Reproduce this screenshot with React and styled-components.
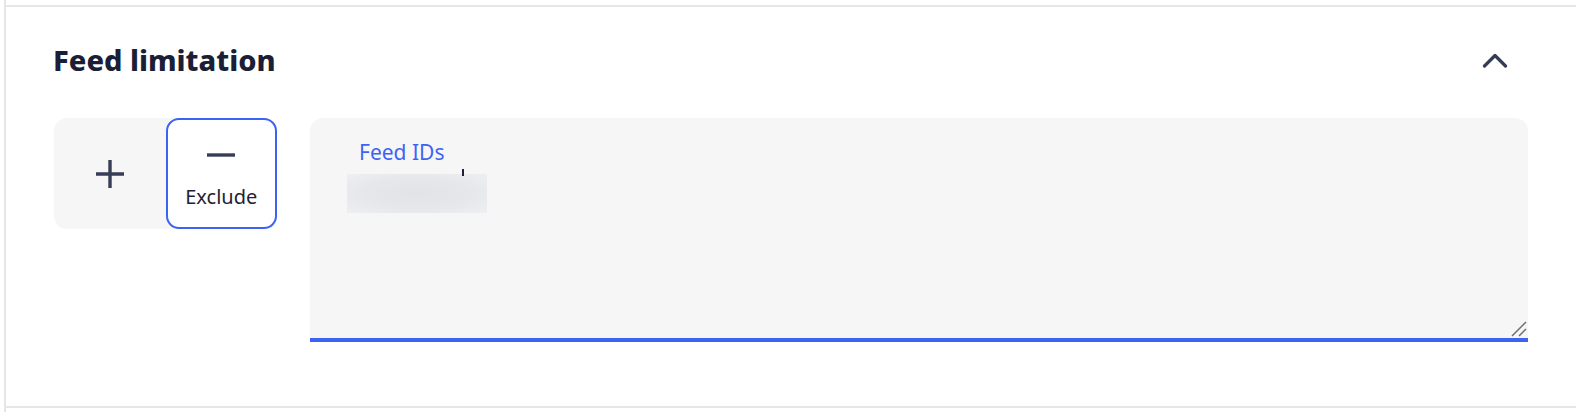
import React from 'react';
import styled, { createGlobalStyle } from 'styled-components';

const Global = createGlobalStyle`
  html, body {
    margin: 0;
    padding: 0;
    background: #ffffff;
  }
  body {
    font-family: 'Noto Sans', 'Open Sans', sans-serif;
    color: #1e2236;
  }
`;

const Frame = styled.div`
  margin-left: 4px;
  height: 412px;
  border-left: 2px solid #e6e6e6;
  box-sizing: border-box;
  padding-top: 5px;
`;

const Section = styled.section`
  border-top: 2px solid #e6e6e6;
  border-bottom: 2px solid #e6e6e6;
  height: 403px;
  box-sizing: border-box;
  padding: 35px 48px 0 47px;
`;

const Header = styled.div`
  display: flex;
  align-items: center;
  justify-content: space-between;
  height: 36px;
`;

const Title = styled.h2`
  margin: 0;
  font-family: 'Noto Sans', sans-serif;
  font-weight: 800;
  font-size: 29px;
  line-height: 36px;
  color: #1a1e36;
`;

const Collapse = styled.button`
  border: 0;
  background: none;
  padding: 0;
  margin-right: 19px;
  width: 28px;
  height: 28px;
  display: flex;
  align-items: center;
  justify-content: center;
  color: #353c56;
  cursor: pointer;
`;

const Body = styled.div`
  display: flex;
  align-items: flex-start;
  gap: 33px;
  margin-top: 40px;
`;

const Toggle = styled.div`
  display: flex;
  width: 223px;
  height: 111px;
  margin-left: 1px;
  background: #f6f6f6;
  border-radius: 13px;
  flex-shrink: 0;
`;

const Option = styled.button`
  flex: 1;
  display: flex;
  flex-direction: column;
  align-items: center;
  justify-content: center;
  gap: 27px;
  border-radius: 13px;
  border: 2px solid ${p => (p.active ? '#3c63f5' : 'transparent')};
  background: ${p => (p.active ? '#ffffff' : 'transparent')};
  color: #1e2236;
  font-family: 'Noto Sans', sans-serif;
  font-size: 20px;
  line-height: 24px;
  padding: ${p => (p.active ? '13px 0 0' : '0')};
  cursor: pointer;
`;

const Field = styled.div`
  position: relative;
  flex: 1;
  height: 224px;
  background: #f6f6f6;
  border-radius: 13px 13px 0 0;
  border-bottom: 4px solid #3d63f4;
  box-sizing: border-box;
  padding: 20px 0 0 37px;
`;

const Label = styled.div`
  font-family: 'Noto Sans', sans-serif;
  font-size: 21px;
  color: #3d63f4;
  line-height: 28px;
  margin-left: 12px;
`;

const ValueRow = styled.div`
  position: relative;
  height: 40px;
  margin-top: 8px;
`;

const Blurred = styled.div`
  width: 140px;
  height: 39px;
  background: radial-gradient(ellipse at center, #e2e3e8 0%, #e6e7eb 55%, #eeeff2 100%);
`;

const Caret = styled.span`
  position: absolute;
  left: 115px;
  top: -5px;
  width: 2px;
  height: 7px;
  background: #1e2236;
`;

const Grip = styled.svg`
  position: absolute;
  right: 1px;
  bottom: 1px;
`;

export default function App() {
  return (
    <>
      <Global />
      <Frame>
        <Section>
          <Header>
            <Title>Feed limitation</Title>
            <Collapse aria-label="collapse">
              <svg width="26" height="16" viewBox="0 0 26 16" fill="none">
                <path d="M2.5 14 L13 3.5 L23.5 14" stroke="currentColor" strokeWidth="3.2" strokeLinecap="round" strokeLinejoin="round" />
              </svg>
            </Collapse>
          </Header>
          <Body>
            <Toggle>
              <Option>
                <svg width="30" height="30" viewBox="0 0 30 30">
                  <path d="M15 1 V29 M1 15 H29" stroke="#363d57" strokeWidth="3.4" />
                </svg>
              </Option>
              <Option active>
                <svg width="30" height="6" viewBox="0 0 30 6">
                  <path d="M1 3 H29" stroke="#363d57" strokeWidth="3.4" />
                </svg>
                <span>Exclude</span>
              </Option>
            </Toggle>
            <Field>
              <Label>Feed IDs</Label>
              <ValueRow>
                <Blurred />
                <Caret />
              </ValueRow>
              <Grip width="16" height="16" viewBox="0 0 16 16">
                <path d="M1 15 L15 1 M8 15 L15 8" stroke="#6e6e6e" strokeWidth="1.5" />
              </Grip>
            </Field>
          </Body>
        </Section>
      </Frame>
    </>
  );
}
